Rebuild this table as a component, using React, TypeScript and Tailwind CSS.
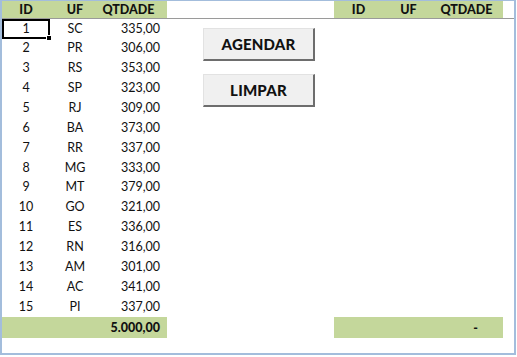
import React from 'react';

const rows: [number, string, string][] = [
  [1, 'SC', '335,00'],
  [2, 'PR', '306,00'],
  [3, 'RS', '353,00'],
  [4, 'SP', '323,00'],
  [5, 'RJ', '309,00'],
  [6, 'BA', '373,00'],
  [7, 'RR', '337,00'],
  [8, 'MG', '333,00'],
  [9, 'MT', '379,00'],
  [10, 'GO', '321,00'],
  [11, 'ES', '336,00'],
  [12, 'RN', '316,00'],
  [13, 'AM', '301,00'],
  [14, 'AC', '341,00'],
  [15, 'PI', '337,00'],
];

function HeaderCells() {
  return (
    <>
      <div className="w-[48px] text-center">ID</div>
      <div className="w-[50px] text-center">UF</div>
      <div className="flex-1 text-center pr-[10px]">QTDADE</div>
    </>
  );
}

function SheetButton({ label }: { label: string }) {
  return (
    <button className="w-[112px] h-[33px] bg-[#f0f0f0] border-t border-l border-[#e2e2e2] border-r-2 border-b-2 border-r-[#6d6d6d] border-b-[#6d6d6d] text-[15px] font-black text-[#111] tracking-[0.2px]">
      {label}
    </button>
  );
}

export default function App() {
  return (
    <div className="w-[517px] h-[357px] bg-white">
      <div className="w-[516px] h-[355px] border-l-2 border-t border-r-2 border-b-2 border-[#a3bddc] flex flex-col font-['Lato',sans-serif] text-[12.5px] text-[#111]">
        {/* Header */}
        <div className="flex h-[18px] border-b border-[#9a9a9a] font-black leading-[17px] text-[#111]">
          <div className="w-[165px] flex bg-[#c4d79b]">
            <HeaderCells />
          </div>
          <div className="w-[167px]" />
          <div className="w-[169px] flex bg-[#c4d79b]">
            <div className="w-[49px] text-center">ID</div>
            <div className="w-[51px] text-center">UF</div>
            <div className="flex-1 text-center pr-[4px]">QTDADE</div>
          </div>
        </div>

        {/* Body */}
        <div className="flex h-[298px]">
          <div className="w-[165px] grid grid-rows-[repeat(15,minmax(0,1fr))]">
            {rows.map(([id, uf, qt]) => (
              <div key={id} className="flex items-center">
                <div
                  className={
                    id === 1
                      ? 'relative w-[48px] h-full flex items-center justify-center border-2 border-black'
                      : 'w-[48px] text-center'
                  }
                >
                  {id}
                  {id === 1 && (
                    <div className="absolute right-[-4px] bottom-[-4px] w-[6px] h-[6px] bg-black border border-white" />
                  )}
                </div>
                <div className="w-[50px] text-center">{uf}</div>
                <div className="flex-1 text-right pr-[7px]">{qt}</div>
              </div>
            ))}
          </div>
          <div className="w-[167px] flex flex-col gap-[13px] pt-[9px] pl-[36px]">
            <SheetButton label="AGENDAR" />
            <SheetButton label="LIMPAR" />
          </div>
          <div className="flex-1" />
        </div>

        {/* Totals */}
        <div className="flex h-[21px] font-black leading-[21px]">
          <div className="w-[165px] bg-[#c4d79b] text-right pr-[7px]">5.000,00</div>
          <div className="w-[167px]" />
          <div className="w-[169px] bg-[#c4d79b] text-right pr-[25px]">-</div>
        </div>
      </div>
    </div>
  );
}
